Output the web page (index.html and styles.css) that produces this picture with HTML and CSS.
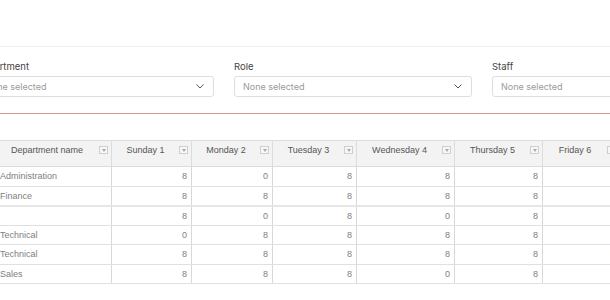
FILE: index.html
```html
<!DOCTYPE html>
<html>
<head>
<meta charset="utf-8">
<link rel="stylesheet" href="styles.css">
</head>
<body>
<div class="page">
  <div class="topbar"></div>
  <div class="filters">
    <div class="field">
      <div class="label">Department</div>
      <div class="select"><span class="ph">None selected</span><svg class="chev" width="8" height="5" viewBox="0 0 8 5"><polyline points="0.5,0.5 4,4 7.5,0.5" fill="none" stroke="#555" stroke-width="1"/></svg></div>
    </div>
    <div class="field">
      <div class="label">Role</div>
      <div class="select"><span class="ph">None selected</span><svg class="chev" width="8" height="5" viewBox="0 0 8 5"><polyline points="0.5,0.5 4,4 7.5,0.5" fill="none" stroke="#555" stroke-width="1"/></svg></div>
    </div>
    <div class="field">
      <div class="label">Staff</div>
      <div class="select"><span class="ph">None selected</span><svg class="chev" width="8" height="5" viewBox="0 0 8 5"><polyline points="0.5,0.5 4,4 7.5,0.5" fill="none" stroke="#555" stroke-width="1"/></svg></div>
    </div>
  </div>
  <table class="grid">
    <colgroup>
      <col class="c-dept"><col class="c-sun"><col class="c-mon"><col class="c-tue"><col class="c-wed"><col class="c-thu"><col class="c-fri">
    </colgroup>
    <thead>
      <tr>
        <th><span class="ht">Department name</span><span class="fi"></span></th>
        <th><span class="ht">Sunday 1</span><span class="fi"></span></th>
        <th><span class="ht">Monday 2</span><span class="fi"></span></th>
        <th><span class="ht">Tuesday 3</span><span class="fi"></span></th>
        <th><span class="ht">Wednesday 4</span><span class="fi"></span></th>
        <th><span class="ht">Thursday 5</span><span class="fi"></span></th>
        <th><span class="ht">Friday 6</span><span class="fi"></span></th>
      </tr>
    </thead>
    <tbody>
      <tr><td class="name">Administration</td><td>8</td><td>0</td><td>8</td><td>8</td><td>8</td><td>8</td></tr>
      <tr class="sep"><td class="name">Finance</td><td>8</td><td>8</td><td>8</td><td>8</td><td>8</td><td>8</td></tr>
      <tr><td class="name"></td><td>8</td><td>0</td><td>8</td><td>0</td><td>8</td><td>8</td></tr>
      <tr><td class="name">Technical</td><td>0</td><td>8</td><td>8</td><td>8</td><td>8</td><td>8</td></tr>
      <tr><td class="name">Technical</td><td>8</td><td>8</td><td>8</td><td>8</td><td>8</td><td>8</td></tr>
      <tr><td class="name">Sales</td><td>8</td><td>8</td><td>8</td><td>0</td><td>8</td><td>8</td></tr>
    </tbody>
  </table>
</div>
</body>
</html>
```

FILE: styles.css
```css
html, body {
  margin: 0;
  padding: 0;
  background: #fff;
  overflow: hidden;
}
.page {
  margin-left: -24px;
  width: 760px;
}
.topbar {
  height: 46px;
  border-bottom: 1px solid #f0f0f0;
}
.filters {
  display: flex;
  gap: 20px;
  padding: 14px 0 16px 0;
  border-bottom: 1px solid #d69c8b;
  font-family: Inter, "Noto Sans", sans-serif;
}
.field {
  width: 238px;
  display: flex;
  flex-direction: column;
}
.label {
  font-size: 9.5px;
  color: #444;
  line-height: 12px;
  margin-bottom: 3px;
}
.select {
  height: 21px;
  box-sizing: border-box;
  border: 1px solid #dedede;
  border-radius: 3px;
  display: flex;
  align-items: center;
  justify-content: space-between;
  padding: 0 9px 0 8px;
}
.ph {
  font-size: 9px;
  color: #9a9a9a;
}
.chev {
  display: block;
}
.grid {
  margin-top: 26px;
  margin-left: 18px;
  border-collapse: collapse;
  table-layout: fixed;
  width: 625px;
  font-family: "Liberation Sans", Arial, sans-serif;
  font-size: 9px;
}
.c-dept { width: 117px; }
.c-sun { width: 80px; }
.c-mon { width: 81px; }
.c-tue { width: 84px; }
.c-wed { width: 98px; }
.c-thu { width: 88px; }
.c-fri { width: 77px; }
.grid th {
  position: relative;
  height: 26px;
  box-sizing: border-box;
  background: #f3f3f3;
  border: 1px solid #dcdcdc;
  color: #555;
  font-weight: normal;
  text-align: center;
  vertical-align: top;
  padding: 3px 16px 0 4px;
  line-height: 12px;
}
.fi {
  position: absolute;
  right: 3px;
  top: 5px;
  width: 9px;
  height: 8px;
  box-sizing: border-box;
  border: 1px solid #cfcfcf;
  background: #f7f7f7;
}
.fi::after {
  content: "";
  position: absolute;
  left: 2px;
  top: 2px;
  border-left: 2px solid transparent;
  border-right: 2px solid transparent;
  border-top: 3px solid #aaa;
}
.grid td {
  height: 19.5px;
  box-sizing: border-box;
  padding: 0 4px;
  border-left: 1px solid #d8d8d8;
  border-right: 1px solid #d8d8d8;
  border-bottom: 1px solid #e0e0e0;
  color: #808080;
  text-align: right;
  vertical-align: middle;
  line-height: 12px;
}
.grid td.name {
  text-align: left;
  padding-left: 5px;
}
.grid tr.sep td {
  border-bottom: 2px solid #e6e6e6;
}
```
